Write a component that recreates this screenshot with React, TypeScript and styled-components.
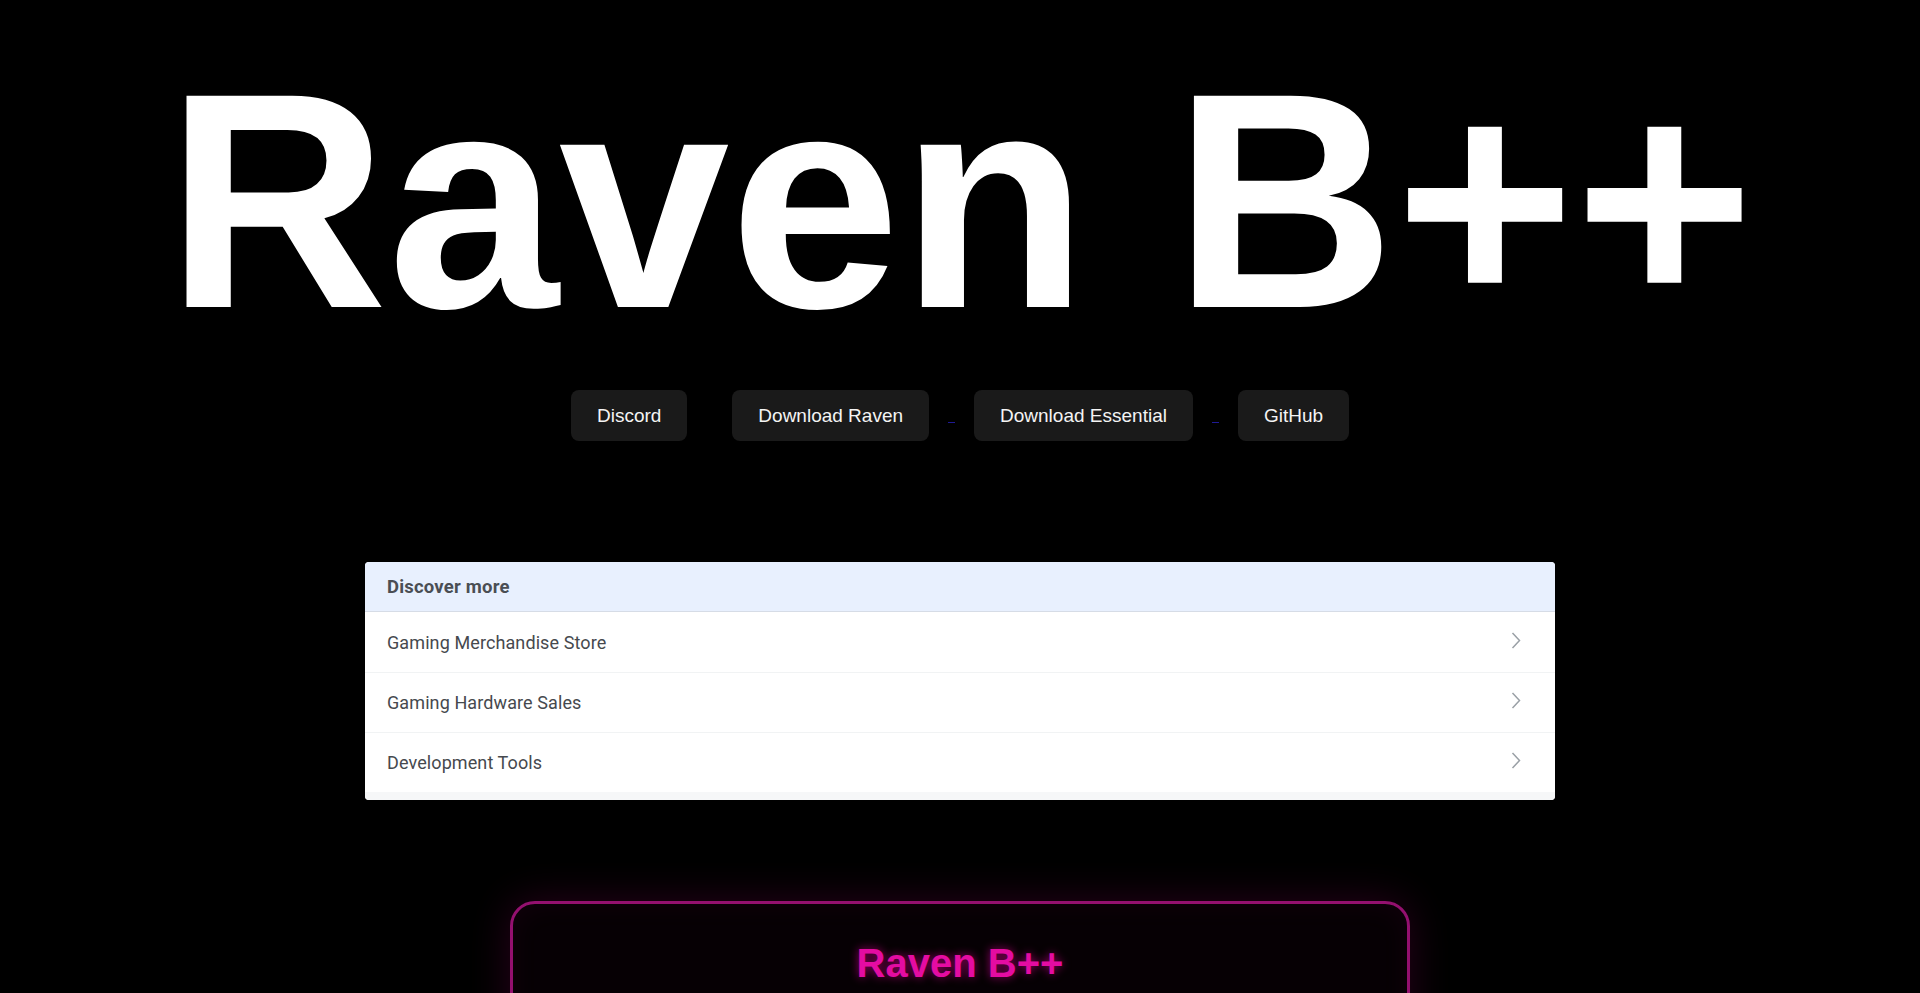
import styled, { createGlobalStyle } from "styled-components";

const GlobalStyle = createGlobalStyle`
  html, body {
    margin: 0;
    padding: 0;
    background: #000;
  }
  body {
    font-family: "Liberation Sans", Arial, sans-serif;
    color: #fff;
  }
`;

const Page = styled.div`
  display: flex;
  flex-direction: column;
  align-items: center;
  min-height: 993px;
  overflow: hidden;
`;

const Title = styled.h1`
  margin: 24px 0 13px;
  font-family: "Liberation Sans", Arial, sans-serif;
  font-weight: 700;
  font-size: 16vw;
  line-height: normal;
  color: #fff;
  white-space: nowrap;
`;

const LinkRow = styled.div`
  display: flex;
  align-items: flex-start;
  gap: 19px;
  height: 51px;
`;

const LinkButton = styled.a`
  display: flex;
  align-items: center;
  height: 51px;
  padding: 0 26px;
  border-radius: 8px;
  background: #1a1a1a;
  color: #f4f4f4;
  font-size: 19px;
  text-decoration: none;
  box-sizing: border-box;
`;

const Underline = styled.span<{ $visible?: boolean }>`
  width: 7px;
  height: 1px;
  margin-top: 32px;
  background: ${(p) => (p.$visible ? "#1f1a95" : "transparent")};
`;

const Discover = styled.div`
  width: 1190px;
  margin-top: 121px;
  border-radius: 4px;
  overflow: hidden;
  background: #fff;
  font-family: Roboto, "Liberation Sans", sans-serif;
`;

const DiscoverHeader = styled.div`
  height: 50px;
  display: flex;
  align-items: center;
  padding-left: 22px;
  background: #e8f0fe;
  border-bottom: 1px solid #d6dce6;
  color: #4a4e54;
  font-size: 18.5px;
  font-weight: 700;
  letter-spacing: 0.2px;
  box-sizing: border-box;
`;

const DiscoverRow = styled.div<{ $first?: boolean }>`
  height: 60px;
  display: flex;
  align-items: center;
  justify-content: space-between;
  padding: 0 34px 0 22px;
  border-top: ${(p) => (p.$first ? "none" : "1px solid #f1f3f4")};
  color: #46494e;
  font-size: 18px;
  letter-spacing: 0.1px;
  box-sizing: border-box;
`;

const Chevron = styled.svg`
  width: 10px;
  height: 17px;
  margin-top: -4px;
`;

const DiscoverFoot = styled.div`
  height: 8px;
  background: #f6f7f8;
`;

const NeonCard = styled.div`
  width: 900px;
  min-height: 400px;
  margin-top: 101px;
  border: 3px solid #94106f;
  border-radius: 25px;
  background: rgba(255, 0, 150, 0.025);
  box-shadow: 0 0 40px rgba(255, 0, 170, 0.16),
    inset 0 0 30px rgba(255, 0, 170, 0.05);
  box-sizing: border-box;
  text-align: center;
`;

const NeonTitle = styled.h2`
  margin: 37px 0 0;
  font-size: 40px;
  font-weight: 700;
  line-height: normal;
  color: #e40ca2;
  text-shadow: 0 0 10px rgba(255, 0, 170, 0.6);
`;

const topics = [
  "Gaming Merchandise Store",
  "Gaming Hardware Sales",
  "Development Tools",
];

function App() {
  return (
    <Page>
      <GlobalStyle />
      <Title>Raven B++</Title>
      <LinkRow>
        <LinkButton href="#">Discord</LinkButton>
        <Underline />
        <LinkButton href="#">Download Raven</LinkButton>
        <Underline $visible />
        <LinkButton href="#">Download Essential</LinkButton>
        <Underline $visible />
        <LinkButton href="#">GitHub</LinkButton>
      </LinkRow>
      <Discover>
        <DiscoverHeader>Discover more</DiscoverHeader>
        {topics.map((t, i) => (
          <DiscoverRow key={t} $first={i === 0}>
            <span>{t}</span>
            <Chevron viewBox="0 0 10 17">
              <polyline
                points="1.5,1 8.5,8.5 1.5,16"
                fill="none"
                stroke="#9aa0a6"
                strokeWidth="1.5"
              />
            </Chevron>
          </DiscoverRow>
        ))}
        <DiscoverFoot />
      </Discover>
      <NeonCard>
        <NeonTitle>Raven B++</NeonTitle>
      </NeonCard>
    </Page>
  );
}

export default App;
